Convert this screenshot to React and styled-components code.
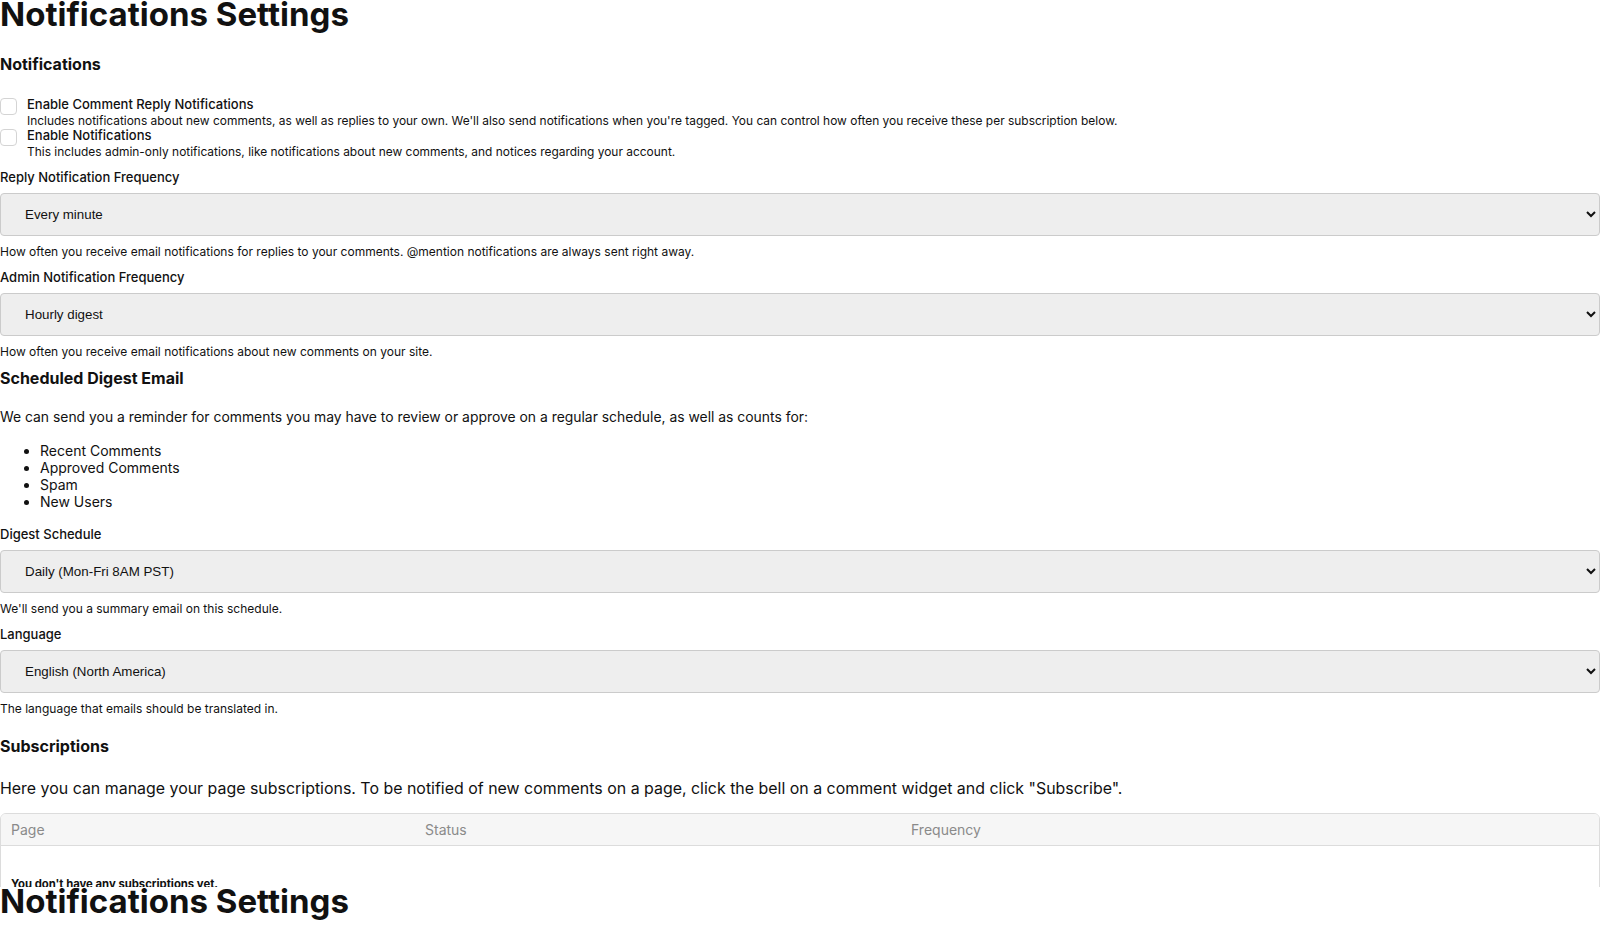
import React from "react";
import styled, { createGlobalStyle } from "styled-components";

const GlobalStyle = createGlobalStyle`
	body {
		margin: 0;
		background: #fff;
		color: #111;
		font-family: Inter, "Noto Sans", sans-serif;
	}
`;

const Clip = styled.div`
	height: 887px;
	overflow: hidden;
`;

const Title = styled.h1`
	margin: -6px 0 0;
	font-size: 33px;
	line-height: 40px;
	font-weight: 700;
`;

const SectionTitle = styled.h2`
	margin: ${(p) => p.$gap}px 0 0;
	font-size: 16px;
	line-height: 19.4px;
	font-weight: 700;
`;

const Text = styled.p`
	margin: ${(p) => p.$gap}px 0 0;
	font-size: ${(p) => p.$size}px;
	line-height: ${(p) => (p.$size > 15 ? 19.4 : 17)}px;
`;

const Checks = styled.div`
	margin-top: 23px;
	display: flex;
	flex-direction: column;
`;

const CheckRow = styled.label`
	display: flex;
	align-items: flex-start;
	gap: 10px;
`;

const Box = styled.input`
	appearance: none;
	flex: none;
	width: 17px;
	height: 17px;
	margin: 1px 0 0;
	border: 1px solid #d4d4d4;
	border-radius: 4px;
	background: #fff;
`;

const CheckText = styled.div`
	display: flex;
	flex-direction: column;
`;

const CheckLabel = styled.span`
	font-size: 13px;
	font-weight: 500;
	line-height: 15.5px;
`;

const Hint = styled.span`
	font-size: 11.95px;
	line-height: 15.2px;
`;

const Field = styled.div`
	margin-top: ${(p) => p.$gap}px;
	display: flex;
	flex-direction: column;
`;

const FieldLabel = styled.label`
	font-size: 13px;
	font-weight: 500;
	line-height: 16px;
`;

const Select = styled.select`
	margin-top: 8px;
	height: 43px;
	width: 100%;
	padding: 0 18px 0 20px;
	border: 1px solid #cbcbcb;
	border-radius: 4px;
	background: #eeeeee;
	color: #111;
	font: 13.33px "Liberation Sans", Arial, sans-serif;
`;

const Help = styled.div`
	margin-top: 8px;
	font-size: 12px;
	line-height: 15px;
`;

const List = styled.ul`
	margin: 16px 0 0;
	padding-left: 40px;
	font-size: 14px;
	line-height: 17px;
`;

const Table = styled.div`
	margin-top: 15px;
	border: 1px solid #dcdcdc;
	border-radius: 6px;
	overflow: hidden;
`;

const HeadRow = styled.div`
	display: grid;
	grid-template-columns: 414px 486px 1fr;
	height: 31px;
	align-items: center;
	background: #f6f6f6;
	border-bottom: 1px solid #dcdcdc;
`;

const HeadCell = styled.div`
	padding-left: 10px;
	font-size: 14px;
	color: #8a8a8a;
`;

const Empty = styled.div`
	padding: 32px 10px 20px;
	font-size: 11.3px;
	font-weight: 700;
	line-height: 13px;
`;

const choices = ["Every minute", "Hourly digest", "Daily (Mon-Fri 8AM PST)", "English (North America)"];

function Dropdown({ value }) {
	return (
		<Select defaultValue={value}>
			<option value={value}>{value}</option>
		</Select>
	);
}

function SettingsPage() {
	return (
		<>
			<Title>Notifications Settings</Title>

			<SectionTitle $gap={21}>Notifications</SectionTitle>
			<Checks>
				<CheckRow>
					<Box type="checkbox" />
					<CheckText>
						<CheckLabel>Enable Comment Reply Notifications</CheckLabel>
						<Hint>
							Includes notifications about new comments, as well as replies to your own. We'll also send
							notifications when you're tagged. You can control how often you receive these per subscription
							below.
						</Hint>
					</CheckText>
				</CheckRow>
				<CheckRow>
					<Box type="checkbox" />
					<CheckText>
						<CheckLabel>Enable Notifications</CheckLabel>
						<Hint>
							This includes admin-only notifications, like notifications about new comments, and notices
							regarding your account.
						</Hint>
					</CheckText>
				</CheckRow>
			</Checks>

			<Field $gap={10}>
				<FieldLabel>Reply Notification Frequency</FieldLabel>
				<Dropdown value={choices[0]} />
				<Help>
					How often you receive email notifications for replies to your comments. @mention notifications are
					always sent right away.
				</Help>
			</Field>
			<Field $gap={10}>
				<FieldLabel>Admin Notification Frequency</FieldLabel>
				<Dropdown value={choices[1]} />
				<Help>How often you receive email notifications about new comments on your site.</Help>
			</Field>

			<SectionTitle $gap={10}>Scheduled Digest Email</SectionTitle>
			<Text $gap={21} $size={13.9}>
				We can send you a reminder for comments you may have to review or approve on a regular schedule, as
				well as counts for:
			</Text>
			<List>
				<li>Recent Comments</li>
				<li>Approved Comments</li>
				<li>Spam</li>
				<li>New Users</li>
			</List>

			<Field $gap={16}>
				<FieldLabel>Digest Schedule</FieldLabel>
				<Dropdown value={choices[2]} />
				<Help>We'll send you a summary email on this schedule.</Help>
			</Field>
			<Field $gap={10}>
				<FieldLabel>Language</FieldLabel>
				<Dropdown value={choices[3]} />
				<Help>The language that emails should be translated in.</Help>
			</Field>

			<SectionTitle $gap={21}>Subscriptions</SectionTitle>
			<Text $gap={22} $size={15.93}>
				Here you can manage your page subscriptions. To be notified of new comments on a page, click the bell
				on a comment widget and click "Subscribe".
			</Text>
			<Table>
				<HeadRow>
					<HeadCell>Page</HeadCell>
					<HeadCell>Status</HeadCell>
					<HeadCell>Frequency</HeadCell>
				</HeadRow>
				<Empty>You don't have any subscriptions yet.</Empty>
			</Table>
		</>
	);
}

export default function App() {
	return (
		<>
			<GlobalStyle />
			<Clip>
				<SettingsPage />
			</Clip>
			<SettingsPage />
		</>
	);
}
